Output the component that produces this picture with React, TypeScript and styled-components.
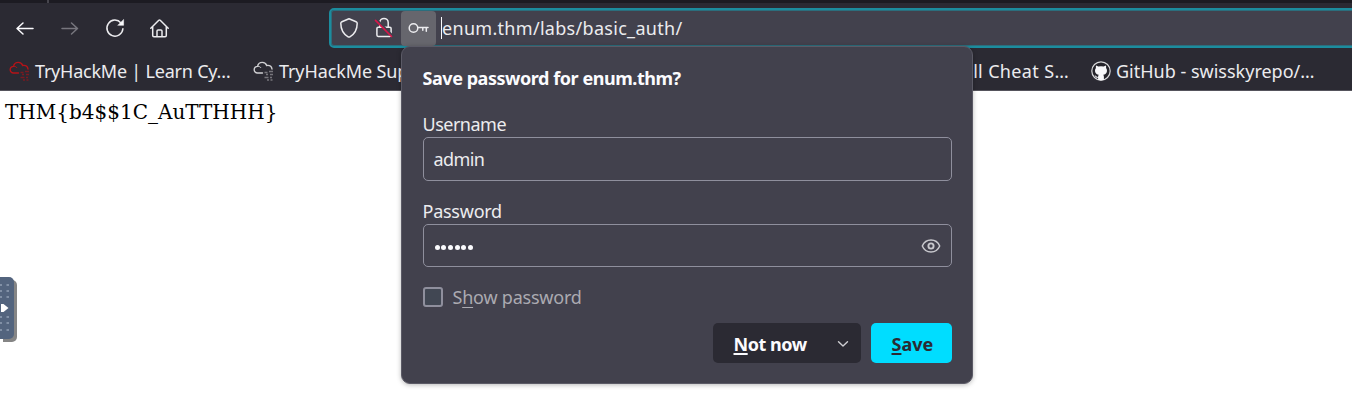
import React from "react";
import styled, { createGlobalStyle } from "styled-components";

const GlobalStyle = createGlobalStyle`
  *, *::before, *::after { box-sizing: border-box; }
  html, body { margin: 0; background: #fff; overflow: hidden; }
  body { font-family: "Noto Sans", "Open Sans", sans-serif; color: #f4f4f6; }
  svg { display: block; flex: none; }
`;

const Window = styled.div`
  position: relative;
  width: 1352px;
  height: 406px;
  overflow: hidden;
  display: flex;
  flex-direction: column;
`;

const TabStrip = styled.div`
  height: 3px;
  flex: none;
  background: #1c1b22;
  padding-left: 47px;
`;

const TabDivider = styled.div`
  width: 2px;
  height: 3px;
  background: #46454d;
`;

const NavBar = styled.div`
  height: 51px;
  flex: none;
  display: flex;
  align-items: flex-start;
  padding-top: 5px;
  background: #2b2a33;
`;

const NavButtons = styled.div`
  width: 329px;
  height: 40px;
  flex: none;
  display: flex;
  align-items: center;
  gap: 25px;
  padding: 0 0 0 15px;
`;

const UrlBar = styled.div`
  flex: 1;
  height: 40px;
  display: flex;
  align-items: center;
  margin-right: -10px;
  border: 2px solid #1c8c9e;
  border-radius: 5px;
  background: #42414d;
  box-shadow: inset 0 0 0 1px rgba(28, 140, 158, 0.6);
  padding-left: 8px;
`;

const SecurityIcons = styled.div`
  display: flex;
  align-items: center;
  gap: 15px;
`;

const KeyBox = styled.div`
  width: 35px;
  height: 35px;
  margin-left: 7px;
  display: flex;
  align-items: center;
  justify-content: center;
  border-radius: 4px;
  background: #66666d;
`;

const Caret = styled.div`
  width: 1px;
  height: 22px;
  margin-left: 5px;
  background: #fbfbfe;
`;

const Label = styled.span<{ $size?: number; $track?: number; $bold?: boolean; $color?: string }>`
  display: block;
  white-space: pre;
  font-size: ${(p) => p.$size ?? 18}px;
  line-height: 24px;
  font-weight: ${(p) => (p.$bold ? 700 : 400)};
  letter-spacing: ${(p) => p.$track ?? 0}px;
  color: ${(p) => p.$color ?? "#ececef"};
`;

const BookmarksBar = styled.div`
  height: 37px;
  flex: none;
  display: flex;
  align-items: center;
  padding: 0 0 2px 9px;
  background: #2b2a33;
  border-bottom: 1px solid #55545c;
`;

const Bookmark = styled.div<{ $width: number }>`
  width: ${(p) => p.$width}px;
  flex: none;
  display: flex;
  align-items: center;
  gap: 5px;
`;

const HiddenBookmark = styled(Bookmark)`
  justify-content: flex-end;
  padding-right: 22px;
`;

const Page = styled.main`
  flex: 1;
  padding: 9px 5px;
  color: #000;
  font: 20px/24px "DejaVu Serif", serif;
`;

const Popup = styled.section`
  position: absolute;
  left: 401px;
  top: 46px;
  width: 572px;
  height: 338px;
  padding: 19px 21px 0 20.5px;
  display: flex;
  flex-direction: column;
  background: #42414d;
  border: 1px solid #5b5a66;
  border-radius: 9px;
  box-shadow: 0 1px 5px rgba(0, 0, 0, 0.28);
`;

const Field = styled.div<{ $top: number }>`
  margin-top: ${(p) => p.$top}px;
`;

const InputBox = styled.div<{ $height: number }>`
  width: 529px;
  height: ${(p) => p.$height}px;
  margin-top: 1px;
  display: flex;
  align-items: center;
  justify-content: space-between;
  padding: 0 10px;
  border: 1px solid #8f8f9d;
  border-radius: 5px;
`;

const Dots = styled.div`
  display: flex;
  gap: 1.7px;
  padding: 3px 0 0 1px;
`;

const Dot = styled.i`
  width: 5px;
  height: 5px;
  border-radius: 50%;
  background: #fbfbfe;
`;

const CheckRow = styled.div`
  margin-top: 18px;
  display: flex;
  align-items: center;
  gap: 10px;
`;

const CheckBox = styled.div`
  width: 20px;
  height: 20px;
  border: 2px solid #8f8f9d;
  border-radius: 3px;
  background: #414753;
`;

const Key = styled.span`
  text-decoration: underline;
  text-decoration-thickness: 1px;
  text-underline-offset: 3px;
`;

const BoldKey = styled(Key)`
  text-decoration-thickness: 2px;
  text-underline-offset: 2px;
`;

const Buttons = styled.div`
  width: 529px;
  margin-top: 14px;
  display: flex;
  justify-content: flex-end;
  gap: 10px;
`;

const Button = styled.div<{ $primary?: boolean }>`
  width: ${(p) => (p.$primary ? 81 : 148)}px;
  height: 40px;
  display: flex;
  align-items: center;
  justify-content: space-between;
  padding: 1px ${(p) => (p.$primary ? 20 : 12)}px 0 21px;
  border-radius: 5px;
  background: ${(p) => (p.$primary ? "#00ddff" : "#2b2a33")};
`;

const SideHandle = styled.div`
  position: absolute;
  left: 0;
  top: 277px;
  width: 14px;
  height: 62px;
  border-radius: 0 5px 5px 0;
  background: #53647e;
  box-shadow: 3px 3px 0 #858585;
`;

const stroke = { fill: "none", stroke: "#ececef", strokeWidth: 1.5, strokeLinecap: "round", strokeLinejoin: "round" } as const;

const ArrowIcon = ({ forward }: { forward?: boolean }) => (
  <svg width="20" height="20" viewBox="0 0 20 20" {...stroke} stroke={forward ? "#77767e" : "#fbfbfe"}>
    {forward ? <path d="M2 10.500h15.500M11.500 5l6 5.500-6 5.500" /> : <path d="M18 10.500H2.500M8 5l-6 5.500L8 16" />}
  </svg>
);

const ReloadIcon = () => (
  <svg width="20" height="20" viewBox="0 0 20 20" {...stroke}>
    <path d="M16 4.900A8 8 0 1 0 17.900 10.800" />
    <path d="M18.600 1.800v5.500h-5.500z" fill="#fbfbfe" strokeWidth=".6" />
  </svg>
);

const HomeIcon = () => (
  <svg width="20" height="20" viewBox="0 0 20 20" {...stroke}>
    <path d="M.800 10.300L8.800 2.300q.7-.6 1.400 0l8 8M2.700 8.800v8.800c0 .7.500 1.200 1.200 1.200h11.200c.7 0 1.200-.5 1.200-1.200V8.800M7 18.500v-5.400c0-.7.400-1.100 1.100-1.100h2.800c.7 0 1.100.4 1.100 1.100v5.400" />
  </svg>
);

const ShieldIcon = () => (
  <svg width="20" height="22" viewBox="0 0 20 22" {...stroke}>
    <path d="M10 1.800l7.100 2.900c.7.300 1.100.8 1.100 1.500 0 5.600-2.400 10.700-7.300 13.600-.6.400-1.200.4-1.800 0C4.200 16.900 1.800 11.800 1.800 6.200c0-.7.400-1.200 1.100-1.500z" />
  </svg>
);

const LockIcon = () => (
  <svg width="20" height="22" viewBox="0 0 20 22" {...stroke}>
    <path d="M5.800 10V5.600a4.200 4.200 0 0 1 8.400 0V10M4.200 10.200h11.600c.8 0 1.300.5 1.300 1.300v6.600c0 .8-.5 1.300-1.300 1.300H4.200c-.8 0-1.300-.5-1.300-1.300v-6.600c0-.8.500-1.300 1.300-1.300z" />
    <path d="M3.200 3.200L18.500 18.500" stroke="#42414d" strokeWidth="2" />
    <path d="M1.500 3.300L17.500 19.500" stroke="#d7164a" strokeWidth="1.700" />
  </svg>
);

const KeyIcon = () => (
  <svg width="21" height="12" viewBox="0 0 21 12" {...stroke}>
    <circle cx="5.500" cy="6" r="4.300" />
    <path d="M10 5.500h10M18.300 5.500v3.800M14.800 5.500v2.800" />
  </svg>
);

const CloudIcon = ({ color, muted }: { color: string; muted: string }) => (
  <svg width="21" height="21" viewBox="0 0 21 21" fill="none" stroke={color} strokeWidth="1.400" strokeLinecap="round">
    <path d="M9.500 12H4.500C2.500 12 1.200 10.500 1.200 8.700c0-1.900 1.400-3.300 3.400-3.300C5 2.800 6.900 1.400 9.300 1.400c2.200 0 3.800 1.200 4.400 3.100 2.800-.4 4.900 1 5.300 3.500" />
    <path d="M5 5.400c1.300-.1 2.200.4 2.800 1.200" strokeWidth="1" />
    <path d="M11.500 11.500h3m1.500-1h4M13 13.500h2m2 0h3M11.500 16.500h4m1.500 0h2M14 19h2m1.500 0h2" stroke={muted} strokeWidth="1.600" strokeLinecap="butt" />
  </svg>
);

const GitHubIcon = () => (
  <svg width="20" height="20" viewBox="0 0 20 20">
    <circle cx="10" cy="10" r="9.200" fill="#25242b" stroke="#d8d8da" strokeWidth="1.200" />
    <path d="M5.200 4.400l2.100 1.200a9 9 0 0 1 5.400 0l2.100-1.200c.5 1 .4 1.900.2 2.500 1.200 1.300 1.200 3.200.6 4.700-.5 1.200-1.600 1.900-3.300 2.200.4.600.6 1.200.6 2v3.100a9 9 0 0 1-5.800 0v-2.200c-1.300.2-2.200-.1-2.800-1.300l-.8-.9c1-.3 1.400.2 1.900.8.500.7 1 .7 1.700.5 0-.8.200-1.500.6-2-1.700-.3-2.800-1-3.300-2.200-.6-1.500-.6-3.400.6-4.700-.2-.6-.3-1.500.2-2.500z" fill="#f8f8fa" />
  </svg>
);

const EyeIcon = () => (
  <svg width="20" height="16" viewBox="0 0 20 16" {...stroke} stroke="#c8c8cd">
    <path d="M1.300 8C3 4 6.200 2 10 2s7 2 8.700 6c-1.700 4-4.900 6-8.700 6s-7-2-8.700-6z" />
    <circle cx="10" cy="8" r="2.600" strokeWidth="1.900" />
  </svg>
);

const ChevronIcon = () => (
  <svg width="12" height="8" viewBox="0 0 12 8" {...stroke} stroke="#cfcfd3" strokeWidth={1.4}>
    <path d="M1.500 1.700L6 6l4.500-4.300" />
  </svg>
);

const HandleDots = () => (
  <svg width="14" height="62" viewBox="0 0 14 62">
    {[8, 14, 20, 40, 46, 53].map((y) => (
      <g key={y} fill="#8190a6">
        <rect x="0" y={y - 1} width="2" height="2" />
        <rect x="6.500" y={y - 1} width="2.500" height="2" />
      </g>
    ))}
    <path d="M1 27h2.500l5 4-5 4H1z" fill="#fff" />
  </svg>
);

export default function App() {
  return (
    <Window>
      <GlobalStyle />
      <TabStrip><TabDivider /></TabStrip>
      <NavBar>
        <NavButtons>
          <ArrowIcon />
          <ArrowIcon forward />
          <ReloadIcon />
          <HomeIcon />
        </NavButtons>
        <UrlBar>
          <SecurityIcons>
            <ShieldIcon />
            <LockIcon />
          </SecurityIcons>
          <KeyBox><KeyIcon /></KeyBox>
          <Caret />
          <Label $track={0.3}>enum.thm/labs/basic_auth/</Label>
        </UrlBar>
      </NavBar>
      <BookmarksBar>
        <Bookmark $width={244}>
          <CloudIcon color="#b51318" muted="#7a1a21" />
          <Label $track={-0.22}>TryHackMe | Learn Cy…</Label>
        </Bookmark>
        <Bookmark $width={240}>
          <CloudIcon color="#d0d0d3" muted="#77767c" />
          <Label $track={-0.1}>TryHackMe Sup</Label>
        </Bookmark>
        <HiddenBookmark $width={598}>
          <Label $track={0.35}>ll Cheat S…</Label>
        </HiddenBookmark>
        <Bookmark $width={250}>
          <GitHubIcon />
          <Label>GitHub - swisskyrepo/…</Label>
        </Bookmark>
      </BookmarksBar>
      <Page>{"THM{b4$$1C_AuTTHHH}"}</Page>
      <Popup>
        <Label $bold $track={-0.45} $color="#fbfbfe">Save password for enum.thm?</Label>
        <Field $top={22}>
          <Label $track={-0.5}>Username</Label>
          <InputBox $height={44}><Label $track={-0.6}>admin</Label></InputBox>
        </Field>
        <Field $top={18}>
          <Label $track={-0.25}>Password</Label>
          <InputBox $height={43}>
            <Dots>{[0, 1, 2, 3, 4, 5].map((n) => <Dot key={n} />)}</Dots>
            <EyeIcon />
          </InputBox>
        </Field>
        <CheckRow>
          <CheckBox />
          <Label $track={-0.22} $color="#abaab1">S<Key>h</Key>ow password</Label>
        </CheckRow>
        <Buttons>
          <Button>
            <Label $bold $track={-0.45} $color="#fbfbfe"><BoldKey>N</BoldKey>ot now</Label>
            <ChevronIcon />
          </Button>
          <Button $primary>
            <Label $bold $color="#2b2a33"><BoldKey>S</BoldKey>ave</Label>
          </Button>
        </Buttons>
      </Popup>
      <SideHandle><HandleDots /></SideHandle>
    </Window>
  );
}
